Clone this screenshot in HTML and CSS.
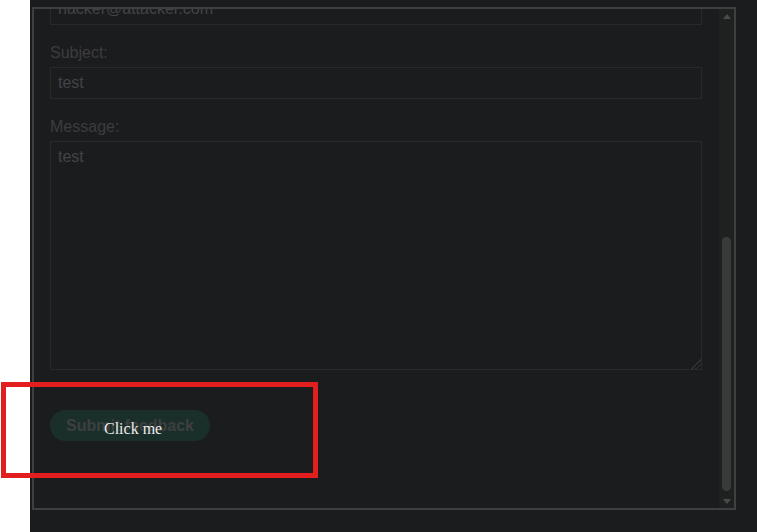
FILE: index.html
```html
<!DOCTYPE html>
<html lang="en">
<head>
    <meta charset="UTF-8">
    <title>Click me</title>
    <link rel="stylesheet" href="styles.css">
</head>
<body>

    <div class="stage">
        <div class="frame">
            <div class="frame-view">
                <form class="feedback">
                    <input class="field" type="text" value="hacker@attacker.com">
                    <label class="label">Subject:</label>
                    <input class="field" type="text" value="test">
                    <label class="label">Message:</label>
                    <textarea class="field message">test</textarea>
                    <button class="submit" type="button">Submit feedback</button>
                </form>
            </div>
            <div class="scrollbar">
                <span class="arrow up"></span>
                <div class="track">
                    <div class="thumb"></div>
                </div>
                <span class="arrow down"></span>
            </div>
        </div>
    </div>

    <!-- decoy over the submit button -->
    <div class="decoy-box"></div>
    <div class="decoy">Click me</div>

</body>
</html>
```

FILE: styles.css
```css
body {
    margin: 0;
    padding: 0;
    background-color: #ffffff;
    overflow: hidden;
}
.stage {
    margin-left: 30px;
    height: 532px;
    background-color: #1b1c1e;
    padding: 7px 0 0 2px;
    box-sizing: border-box;
}
.frame {
    width: 704px;
    height: 503px;
    border: 2px solid #3e3f41;
    box-sizing: border-box;
    display: flex;
    overflow: hidden;
    background-color: #1b1c1e;
}
.frame-view {
    flex: 1;
    overflow: hidden;
}
.feedback {
    margin-top: -16px;
    padding: 0 17px 0 16px;
    display: flex;
    flex-direction: column;
    align-items: flex-start;
    font-family: "Liberation Sans", Arial, sans-serif;
}
.field {
    width: 100%;
    height: 32px;
    box-sizing: border-box;
    margin: 0;
    padding: 0 7px;
    border: 1px solid #27292b;
    background-color: #1b1c1e;
    color: #424447;
    font-family: "Liberation Sans", Arial, sans-serif;
    font-size: 16px;
    outline: none;
}
.message {
    height: 229px;
    padding: 6px 7px;
    line-height: 18px;
    resize: vertical;
}
.message::-webkit-resizer {
    background: linear-gradient(135deg, transparent 66%, #303235 66%, #303235 72%, transparent 72%, transparent 80%, #303235 80%, #303235 86%, transparent 86%);
}
.label {
    display: block;
    margin: 19px 0 5px;
    line-height: 18px;
    font-size: 16px;
    color: #3b3d3f;
}
.submit {
    margin-top: 40px;
    width: 160px;
    height: 31px;
    padding: 0;
    border: none;
    border-radius: 16px;
    background-color: #1a2f2a;
    color: #3d3f40;
    font-family: "Liberation Sans", Arial, sans-serif;
    font-size: 16px;
    font-weight: bold;
}
.scrollbar {
    width: 15px;
    background-color: #1f2120;
    display: flex;
    flex-direction: column;
    align-items: center;
    padding: 5px 0 4px;
    box-sizing: border-box;
}
.arrow {
    width: 0;
    height: 0;
    border-left: 4.5px solid transparent;
    border-right: 4.5px solid transparent;
}
.arrow.up {
    border-bottom: 5px solid #4a4c4b;
}
.arrow.down {
    border-top: 5px solid #4a4c4b;
}
.track {
    flex: 1;
    width: 100%;
    display: flex;
    flex-direction: column;
    justify-content: flex-end;
    align-items: center;
    padding-bottom: 8px;
}
.thumb {
    width: 9px;
    height: 254px;
    border-radius: 5px;
    background-color: #393b3a;
}
.decoy-box {
    position: absolute;
    left: 1px;
    top: 382px;
    width: 317px;
    height: 96px;
    border: 5px solid #e31e1e;
    box-sizing: border-box;
}
.decoy {
    position: absolute;
    left: 104px;
    top: 420px;
    font-family: "Liberation Serif", "Times New Roman", serif;
    font-size: 16px;
    color: #ececec;
}
```
